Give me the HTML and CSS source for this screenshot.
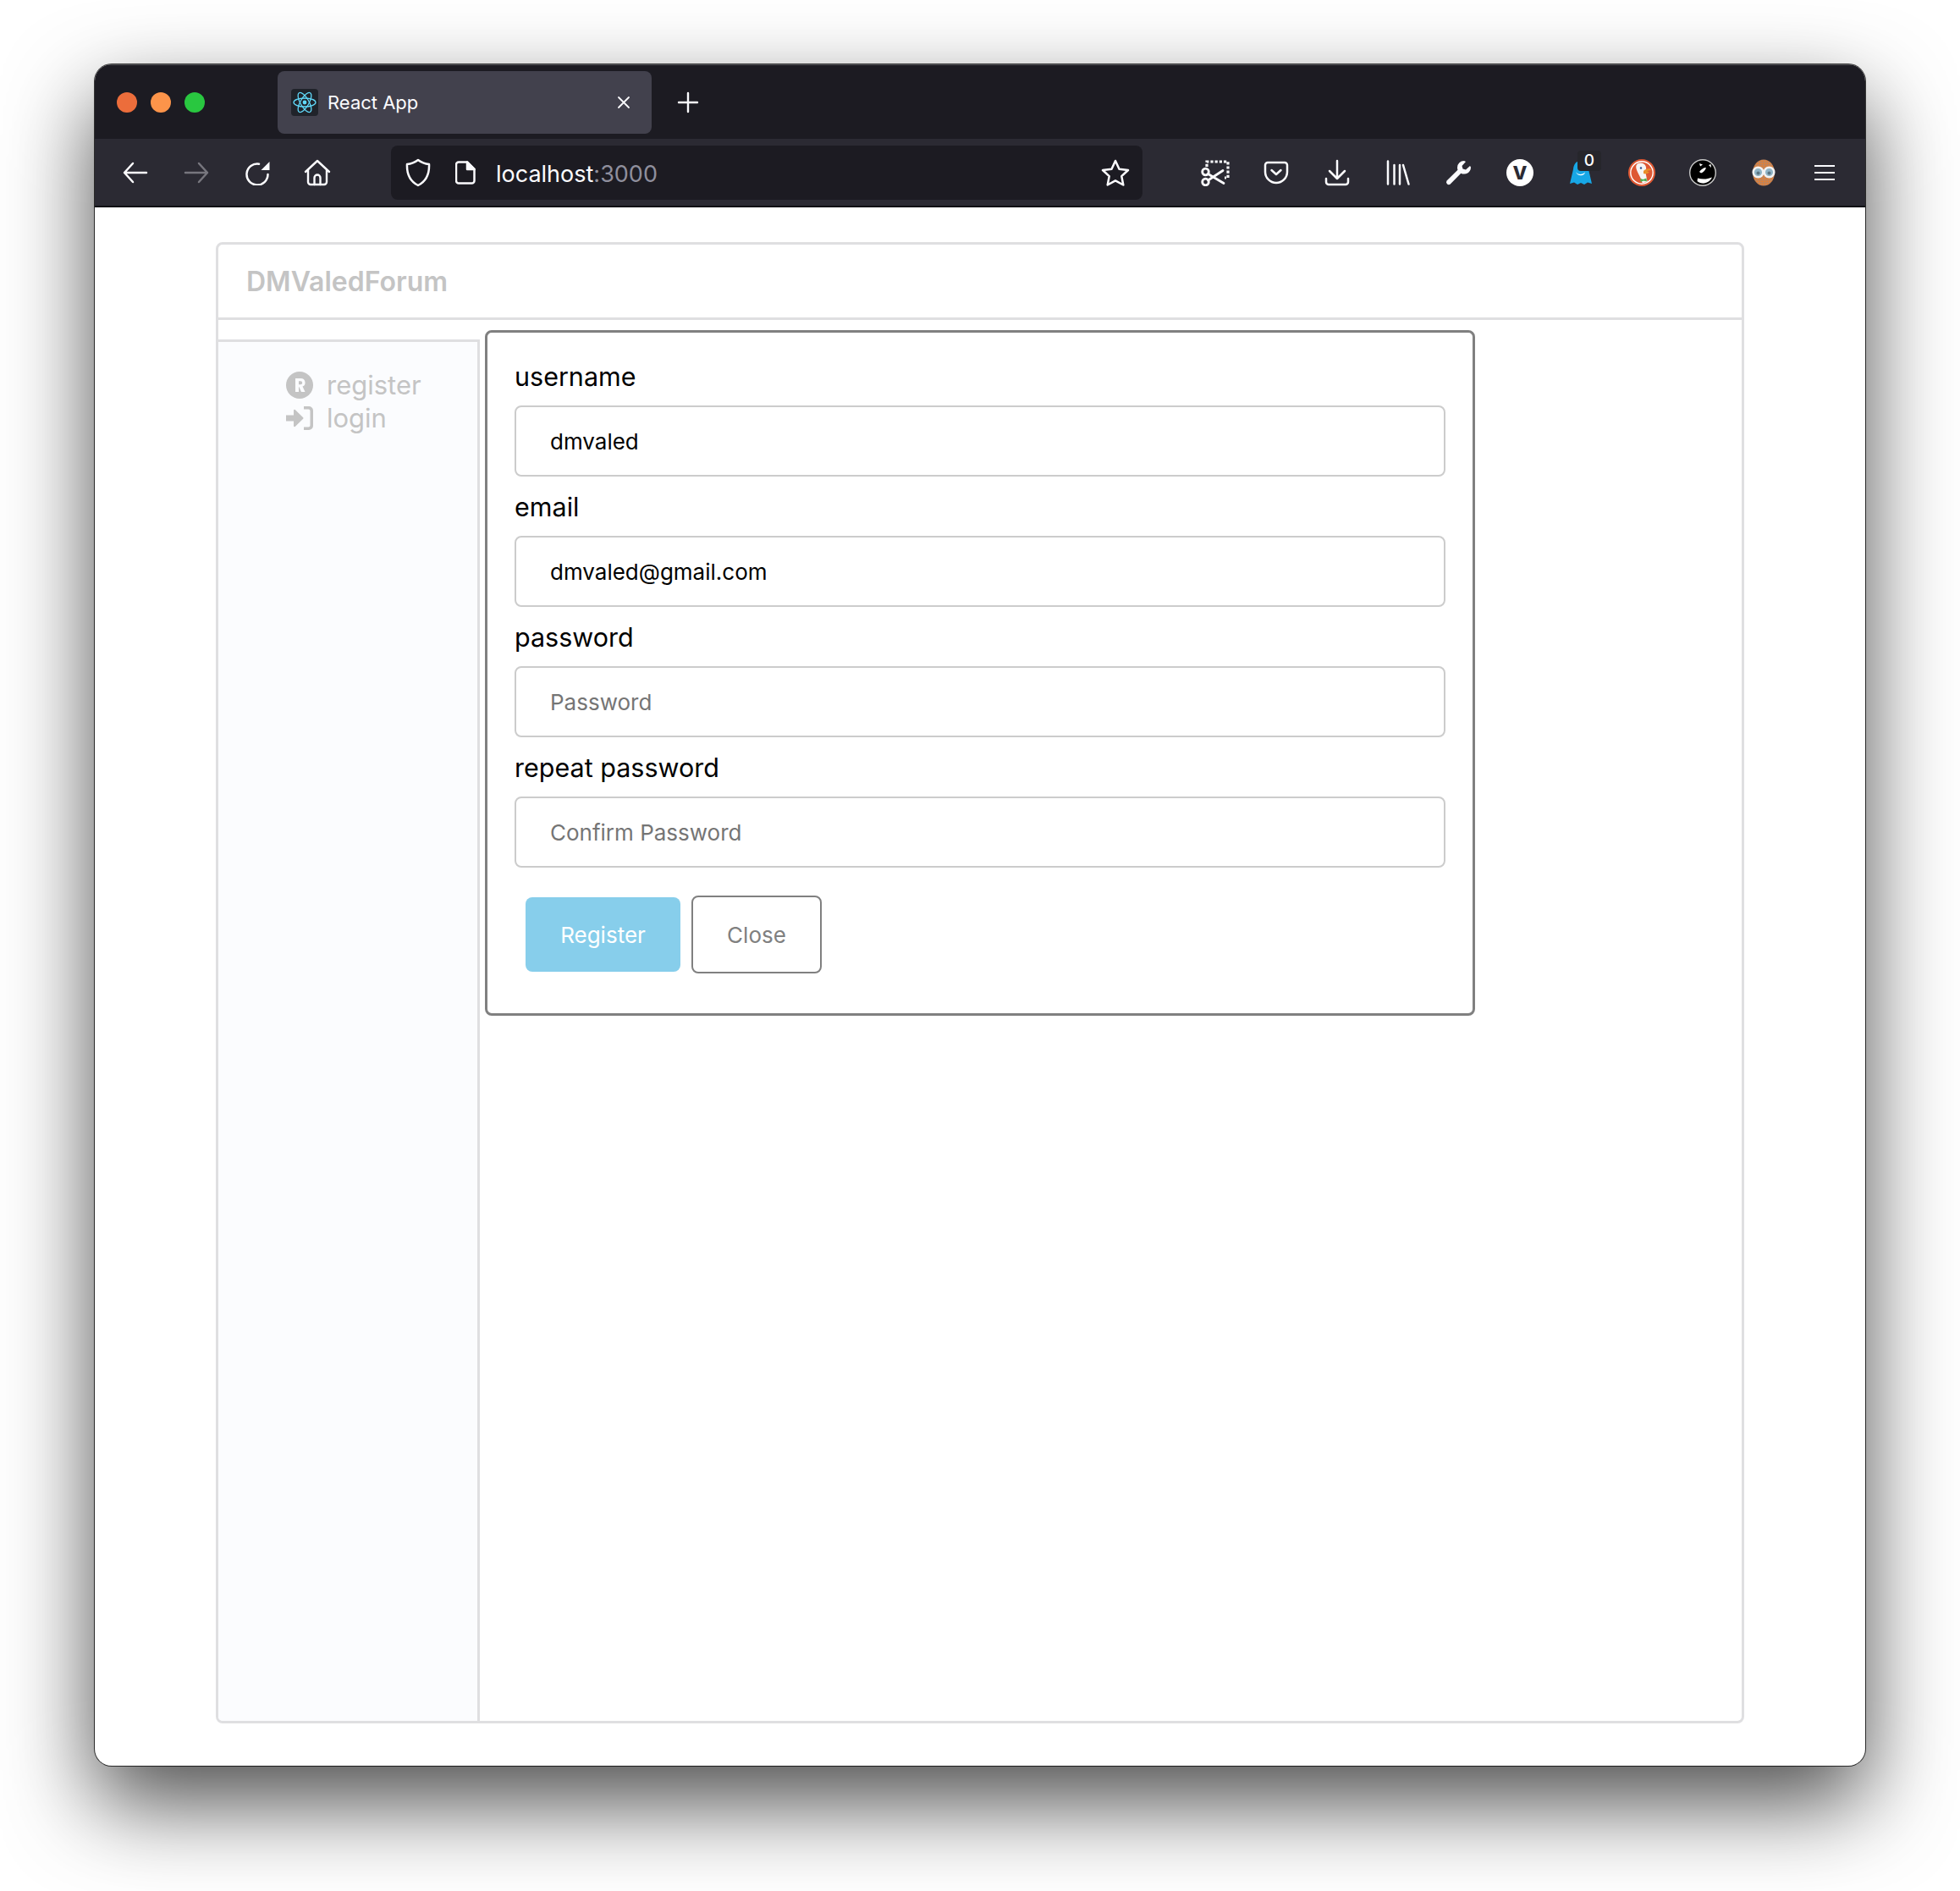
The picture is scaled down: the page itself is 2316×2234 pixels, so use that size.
FILE: index.html
```html
<!DOCTYPE html>
<html lang="en">
<head>
    <meta charset="UTF-8">
    <title>React App</title>
    <link rel="stylesheet" href="styles.css">
</head>
<body>
    <div class="window">
        <div class="titlebar">
            <div class="dots">
                <span class="dot red"></span>
                <span class="dot yellow"></span>
                <span class="dot green"></span>
            </div>
            <div class="tab">
                <span class="favicon">
                    <svg width="28" height="28" viewBox="0 0 28 28" fill="none" stroke="#61dafb" stroke-width="1.3">
                        <ellipse cx="14" cy="14" rx="13" ry="5"/>
                        <ellipse cx="14" cy="14" rx="13" ry="5" transform="rotate(60 14 14)"/>
                        <ellipse cx="14" cy="14" rx="13" ry="5" transform="rotate(120 14 14)"/>
                        <circle cx="14" cy="14" r="2.4" fill="#61dafb" stroke="none"/>
                    </svg>
                </span>
                <span class="tab-title">React App</span>
                <svg class="tab-close" width="16" height="16" viewBox="0 0 16 16" fill="none" stroke="#fbfbfe" stroke-width="1.8" stroke-linecap="round">
                    <path d="M2 2l12 12M14 2L2 14"/>
                </svg>
            </div>
            <svg class="new-tab" width="26" height="26" viewBox="0 0 26 26" fill="none" stroke="#fbfbfe" stroke-width="2.4" stroke-linecap="round">
                <path d="M13 2v22M2 13h22"/>
            </svg>
        </div>

        <div class="toolbar">
            <div class="nav">
                <span class="tool">
                    <svg width="30" height="26" viewBox="0 0 30 26" fill="none" stroke="#fbfbfe" stroke-width="2.5" stroke-linecap="round" stroke-linejoin="round">
                        <path d="M28 13H2M12 2L2 13l10 11"/>
                    </svg>
                </span>
                <span class="tool">
                    <svg width="30" height="26" viewBox="0 0 30 26" fill="none" stroke="#77767e" stroke-width="2.5" stroke-linecap="round" stroke-linejoin="round">
                        <path d="M2 13h26M18 2l10 11-10 11"/>
                    </svg>
                </span>
                <span class="tool">
                    <svg width="30" height="30" viewBox="0 0 30 30" fill="none" stroke="#fbfbfe" stroke-width="2.5" stroke-linecap="round">
                        <path d="M27.500 17A12.500 12.500 0 1 1 17 4.700"/>
                        <path d="M19.500 12L29.500 2v10z" fill="#fbfbfe" stroke="none"/>
                    </svg>
                </span>
                <span class="tool">
                    <svg class="home-icon" width="32" height="32" viewBox="0 0 32 32" fill="none" stroke="#fbfbfe" stroke-width="2.4" stroke-linecap="round" stroke-linejoin="round">
                        <path d="M2 15L16 2l14 13"/>
                        <path d="M5 13v14a3 3 0 0 0 3 3h16a3 3 0 0 0 3-3V13"/>
                        <path d="M12.5 30v-8a3.5 3.5 0 0 1 7 0v8"/>
                    </svg>
                </span>
            </div>

            <div class="urlbar">
                <svg class="url-shield" width="30" height="34" viewBox="0 0 30 34" fill="none" stroke="#fbfbfe" stroke-width="2.5" stroke-linejoin="round">
                    <path d="M15 2c4 3 8 4.500 13 5 .5 11-3 20-13 25C5 27 1.500 18 2 7c5-.5 9-2 13-5z"/>
                </svg>
                <svg class="url-page" width="24" height="28" viewBox="0 0 24 28" fill="none" stroke="#fbfbfe" stroke-width="2.500" stroke-linejoin="round">
                    <path d="M4 1.500h10l8.500 8.500v13.500a3 3 0 0 1-3 3H4a3 3 0 0 1-3-3v-19a3 3 0 0 1 3-3z"/>
                    <path d="M14 1.500l8.500 8.500H14z" fill="#fbfbfe"/>
                </svg>
                <span class="url-text">localhost<span class="url-port">:3000</span></span>
                <svg class="url-star" width="34" height="32" viewBox="0 0 34 32" fill="none" stroke="#fbfbfe" stroke-width="2.500" stroke-linejoin="round">
                    <path d="M17 2l4.500 9.700 10.500 1.300-7.700 7.200 2 10.300L17 25.400 7.700 30.500l2-10.300L2 13l10.500-1.300z"/>
                </svg>
            </div>

            <div class="tools">
                <span class="tool">
                    <svg width="34" height="32" viewBox="0 0 34 32" fill="none" stroke="#fbfbfe" stroke-width="3.200">
                        <path d="M7 9V3h25v19h-4" stroke-dasharray="3.200 2"/>
                        <circle cx="5.500" cy="15" r="3.800" stroke-width="2.800"/>
                        <circle cx="5.500" cy="27" r="3.800" stroke-width="2.800"/>
                        <path d="M8.500 25L26 13.500M8.500 17.500L27 28.500" stroke-width="2.800" stroke-linecap="round"/>
                    </svg>
                </span>
                <span class="tool">
                    <svg width="30" height="28" viewBox="0 0 30 28" fill="none" stroke="#fbfbfe" stroke-width="2.500" stroke-linecap="round" stroke-linejoin="round">
                        <path d="M5 2h20a3 3 0 0 1 3 3v8a13 13 0 0 1-26 0V5a3 3 0 0 1 3-3z"/>
                        <path d="M9.500 11l5.500 5 5.500-5"/>
                    </svg>
                </span>
                <span class="tool">
                    <svg width="30" height="32" viewBox="0 0 30 32" fill="none" stroke="#fbfbfe" stroke-width="2.500" stroke-linecap="round" stroke-linejoin="round">
                        <path d="M15 2v21M6 14l9 9 9-9"/>
                        <path d="M2 23v4a3 3 0 0 0 3 3h20a3 3 0 0 0 3-3v-4"/>
                    </svg>
                </span>
                <span class="tool">
                    <svg width="28" height="30" viewBox="0 0 28 30" fill="none" stroke="#fbfbfe" stroke-width="2.500" stroke-linecap="round">
                        <path d="M2 1.500v27M9.500 6v22.500M16 6v22.500M20 6l6.500 22.500"/>
                    </svg>
                </span>
                <span class="tool">
                    <svg width="32" height="30" viewBox="0 0 32 30" fill="#fbfbfe">
                        <path d="M22 1a8 8 0 0 0-8 8c0 1 .2 2 .5 2.800L1.500 24.500a3 3 0 0 0 4 4.200l12.800-13A8 8 0 0 0 30 8.500L29 7l-5 4.500-3.500-1-1-3.500L24 2z"/>
                    </svg>
                </span>
                <span class="tool">
                    <span class="v-badge">V</span>
                </span>
                <span class="tool ghost-tool">
                    <svg width="26" height="28" viewBox="0 0 26 28">
                        <path d="M13 0c5.500 0 8.500 4 9 10l4 17-5-1.500L17 28l-4-2-4 2-4-2.500L0 27l4-17c.5-6 3.500-10 9-10z" fill="#17a7e6"/>
                        <path d="M7 13c2 3.500 8 4 11 .500-.5 5-9.500 5-11-.500z" fill="#fff"/>
                    </svg>
                    <span class="count">0</span>
                </span>
                <span class="tool">
                    <svg width="32" height="32" viewBox="0 0 32 32">
                        <circle cx="16" cy="16" r="16" fill="#de5833"/>
                        <circle cx="16" cy="16" r="13.200" fill="#de5833" stroke="#fff" stroke-width="1.400"/>
                        <path d="M10 6c4-2.500 9-1.500 10.500 2 1 2 .5 4 .5 5-1 4 1 9 1.500 13.500-1.800 1-3.800 1.600-6 1.500-1-5-5-11-6.800-16-.7-2.500-.7-5 .8-6z" fill="#f5f5f5"/>
                        <path d="M18 14c2-2 5-3 8-2.500l1 1.500-5 1 3 1.500c-2 2-5 2.500-7 1.500z" fill="#e8902b"/>
                        <path d="M14.500 23l3 1 4-1.500.5 4-4-1-3.500 1.500z" fill="#4caf50"/>
                        <circle cx="15" cy="10.500" r="1.200" fill="#2d4f8e"/>
                    </svg>
                </span>
                <span class="tool">
                    <svg width="32" height="32" viewBox="0 0 32 32">
                        <circle cx="16" cy="16" r="15.300" fill="#000" stroke="#c8c8c8" stroke-width="1.400"/>
                        <path d="M10 22.500c4 1 8 1.500 12 .5 2-.5 3.500-1 5-1.500-2 4.500-6.500 7-11 7-2.500 0-5-1-6.500-2.500z" fill="#fff"/>
                        <path d="M12 15c2-3 5-5 8-5-1 3-3 5.500-6 6.500z" fill="#fff"/>
                        <path d="M12 5l4 1.500-3 2z" fill="#fff"/>
                        <path d="M23 7l2.500-1 .5 4z" fill="#fff"/>
                    </svg>
                </span>
                <span class="tool">
                    <svg width="32" height="32" viewBox="0 0 32 32">
                        <defs>
                            <pattern id="speck" width="3" height="3" patternUnits="userSpaceOnUse">
                                <rect width="3" height="3" fill="#d9813f"/>
                                <rect width="1.500" height="1.500" fill="#a3887a"/>
                            </pattern>
                        </defs>
                        <ellipse cx="16" cy="16" rx="13" ry="15.500" fill="url(#speck)"/>
                        <circle cx="9.500" cy="15.500" r="5.800" fill="#8fb4c6" stroke="#f2f2f2" stroke-width="2.500"/>
                        <circle cx="22.500" cy="15.500" r="5.800" fill="#8fb4c6" stroke="#f2f2f2" stroke-width="2.500"/>
                        <circle cx="9.500" cy="16.500" r="2" fill="#5b7482"/>
                        <circle cx="22.500" cy="16.500" r="2" fill="#5b7482"/>
                    </svg>
                </span>
                <span class="tool">
                    <span class="menu-icon"><i></i><i></i><i></i></span>
                </span>
            </div>
        </div>

        <div class="page">
            <div class="card">
                <div class="card-header">DMValedForum</div>
                <div class="card-body">
                    <div class="sidebar">
                        <a class="side-link">
                            <svg class="side-icon" width="32" height="32" viewBox="0 0 32 32">
                                <circle cx="16" cy="16" r="16" fill="#c4c4c4"/>
                                <path d="M11 8h6.500a5 5 0 0 1 2 9.600l3 6.400H18l-2.500-5.700H15V24h-4zm4 3.200v4h2.200a2 2 0 0 0 0-4z" fill="#fbfcfe"/>
                            </svg>
                            register
                        </a>
                        <a class="side-link">
                            <svg class="side-icon" width="32" height="28" viewBox="0 0 32 28" fill="#c4c4c4">
                                <path d="M0 10.500h9V4.800a1 1 0 0 1 1.700-.7l9.500 9.200a1 1 0 0 1 0 1.400l-9.500 9.200a1 1 0 0 1-1.700-.7v-5.700H0z"/>
                                <path d="M21 0h6a5 5 0 0 1 5 5v18a5 5 0 0 1-5 5h-6v-3.500h5.500a2 2 0 0 0 2-2v-17a2 2 0 0 0-2-2H21z"/>
                            </svg>
                            login
                        </a>
                    </div>
                    <form class="register-form">
                        <label class="field-label" for="username">username</label>
                        <input class="field-input" id="username" type="text" value="dmvaled">
                        <label class="field-label" for="email">email</label>
                        <input class="field-input" id="email" type="email" value="dmvaled@gmail.com">
                        <label class="field-label" for="password">password</label>
                        <input class="field-input" id="password" type="password" placeholder="Password">
                        <label class="field-label" for="confirm">repeat password</label>
                        <input class="field-input" id="confirm" type="password" placeholder="Confirm Password">
                        <div class="form-buttons">
                            <button class="btn btn-register" type="button">Register</button>
                            <button class="btn btn-close" type="button">Close</button>
                        </div>
                    </form>
                </div>
            </div>
        </div>
    </div>
</body>
</html>
```

FILE: styles.css
```css
* {
    box-sizing: border-box;
}

html, body {
    margin: 0;
    background-color: #fff;
}

body {
    height: 2234px;
    padding: 76px 0 0 112px;
    overflow: hidden;
    font-family: 'Inter', 'Liberation Sans', sans-serif;
}

.window {
    width: 2092px;
    height: 2010px;
    border-radius: 20px;
    overflow: hidden;
    background-color: #fff;
    box-shadow: 0 0 0 1px rgba(0, 0, 0, 0.75), 0 44px 104px rgba(0, 0, 0, 0.7);
    display: flex;
    flex-direction: column;
}

/* browser chrome */
.titlebar {
    height: 88px;
    flex: none;
    display: flex;
    align-items: center;
    background-color: #1c1b22;
    border-top: 1px solid #55555a;
}

.dots {
    width: 216px;
    flex: none;
    display: flex;
    gap: 16px;
    padding-left: 26px;
}

.dot {
    width: 24px;
    height: 24px;
    border-radius: 50%;
}

.red { background-color: #ec6d3b; }
.yellow { background-color: #fc944a; }
.green { background-color: #29c740; }

.tab {
    width: 442px;
    height: 74px;
    flex: none;
    display: flex;
    align-items: center;
    padding: 0 16px;
    border-radius: 8px;
    background-color: #42414d;
}

.favicon {
    width: 32px;
    height: 32px;
    display: flex;
    align-items: center;
    justify-content: center;
    border-radius: 4px;
    background-color: #20232a;
}

.tab-title {
    flex: 1;
    margin-left: 11px;
    font-size: 22px;
    color: #fbfbfe;
}

.tab-close {
    margin-right: 9px;
}

.new-tab {
    margin-left: 30px;
}

.toolbar {
    height: 81px;
    flex: none;
    display: flex;
    align-items: center;
    background-color: #2b2a33;
    border-bottom: 2px solid #101014;
}

.nav {
    display: flex;
    width: 350px;
    flex: none;
    padding-left: 12px;
}

.home-icon {
    margin-left: -2px;
}

.tool {
    width: 72px;
    height: 72px;
    flex: none;
    position: relative;
    display: flex;
    align-items: center;
    justify-content: center;
}

.urlbar {
    width: 888px;
    height: 64px;
    flex: none;
    display: flex;
    align-items: center;
    border-radius: 8px;
    background-color: #1c1b22;
    padding: 0 15px 0 17px;
}

.url-page {
    margin-left: 29px;
}

.url-text {
    flex: 1;
    margin-left: 24px;
    padding-top: 3px;
    font-size: 27px;
    color: #fbfbfe;
}

.url-port {
    color: #8f8f9d;
}

.tools {
    display: flex;
    margin-left: 50px;
}

.v-badge {
    width: 32px;
    height: 32px;
    border-radius: 50%;
    display: flex;
    align-items: center;
    justify-content: center;
    background-color: #fff;
    color: #2b2a33;
    font-size: 22px;
    font-weight: 800;
}

.count {
    position: absolute;
    left: 32px;
    top: 10px;
    width: 28px;
    height: 24px;
    border-radius: 4px;
    background-color: #26262b;
    color: #fff;
    font-size: 19px;
    font-weight: 500;
    text-align: center;
    line-height: 24px;
}

.menu-icon {
    width: 24px;
    display: flex;
    flex-direction: column;
    gap: 6px;
}

.menu-icon i {
    height: 2px;
    background-color: #fbfbfe;
}

/* page */
.page {
    flex: 1;
    min-height: 0;
    padding: 41px 0 0 143px;
}

.card {
    width: 1806px;
    height: 1750px;
    border: 3px solid #dfdfe1;
    border-radius: 8px;
    display: flex;
    flex-direction: column;
    overflow: hidden;
}

.card-header {
    height: 89px;
    flex: none;
    padding-left: 33px;
    line-height: 88px;
    font-size: 32px;
    font-weight: 600;
    color: #c4c4c4;
    border-bottom: 3px solid #dfdfe1;
}

.card-body {
    flex: 1;
    min-height: 0;
    display: flex;
    align-items: flex-start;
}

.sidebar {
    width: 309px;
    height: calc(100% - 23px);
    flex: none;
    margin-top: 23px;
    padding: 31px 0 0 80px;
    background-color: #fbfcfe;
    border-top: 3px solid #dfdfe1;
    border-right: 3px solid #dfdfe1;
}

.side-link {
    height: 39px;
    display: flex;
    align-items: center;
    gap: 16px;
    font-size: 31px;
    color: #c4c4c4;
}

.side-icon {
    flex: none;
}

.register-form {
    width: 1170px;
    height: 810px;
    flex: none;
    margin: 12px 0 0 6px;
    padding: 18px 32px 0;
    background-color: #fff;
    border: 3px solid #808080;
    border-radius: 8px;
}

.field-label {
    display: block;
    height: 68px;
    line-height: 68px;
    font-size: 30.5px;
    color: #000;
}

.field-input {
    display: block;
    width: 100%;
    height: 84px;
    margin-bottom: 2px;
    padding: 0 40px;
    border: 2px solid #ccc;
    border-radius: 8px;
    font-family: inherit;
    font-size: 26px;
    color: #000;
    outline: none;
}

.field-input::placeholder {
    color: #757575;
}

.form-buttons {
    display: flex;
    align-items: center;
    gap: 13px;
    margin-top: 33px;
    padding-left: 13px;
}

.btn {
    font-family: inherit;
    font-size: 26px;
    border-radius: 8px;
    cursor: pointer;
}

.btn-register {
    width: 183px;
    height: 88px;
    border: none;
    background-color: #87ceeb;
    color: #fff;
}

.btn-close {
    width: 154px;
    height: 92px;
    border: 2px solid #808080;
    background-color: #fff;
    color: #808080;
}
```
